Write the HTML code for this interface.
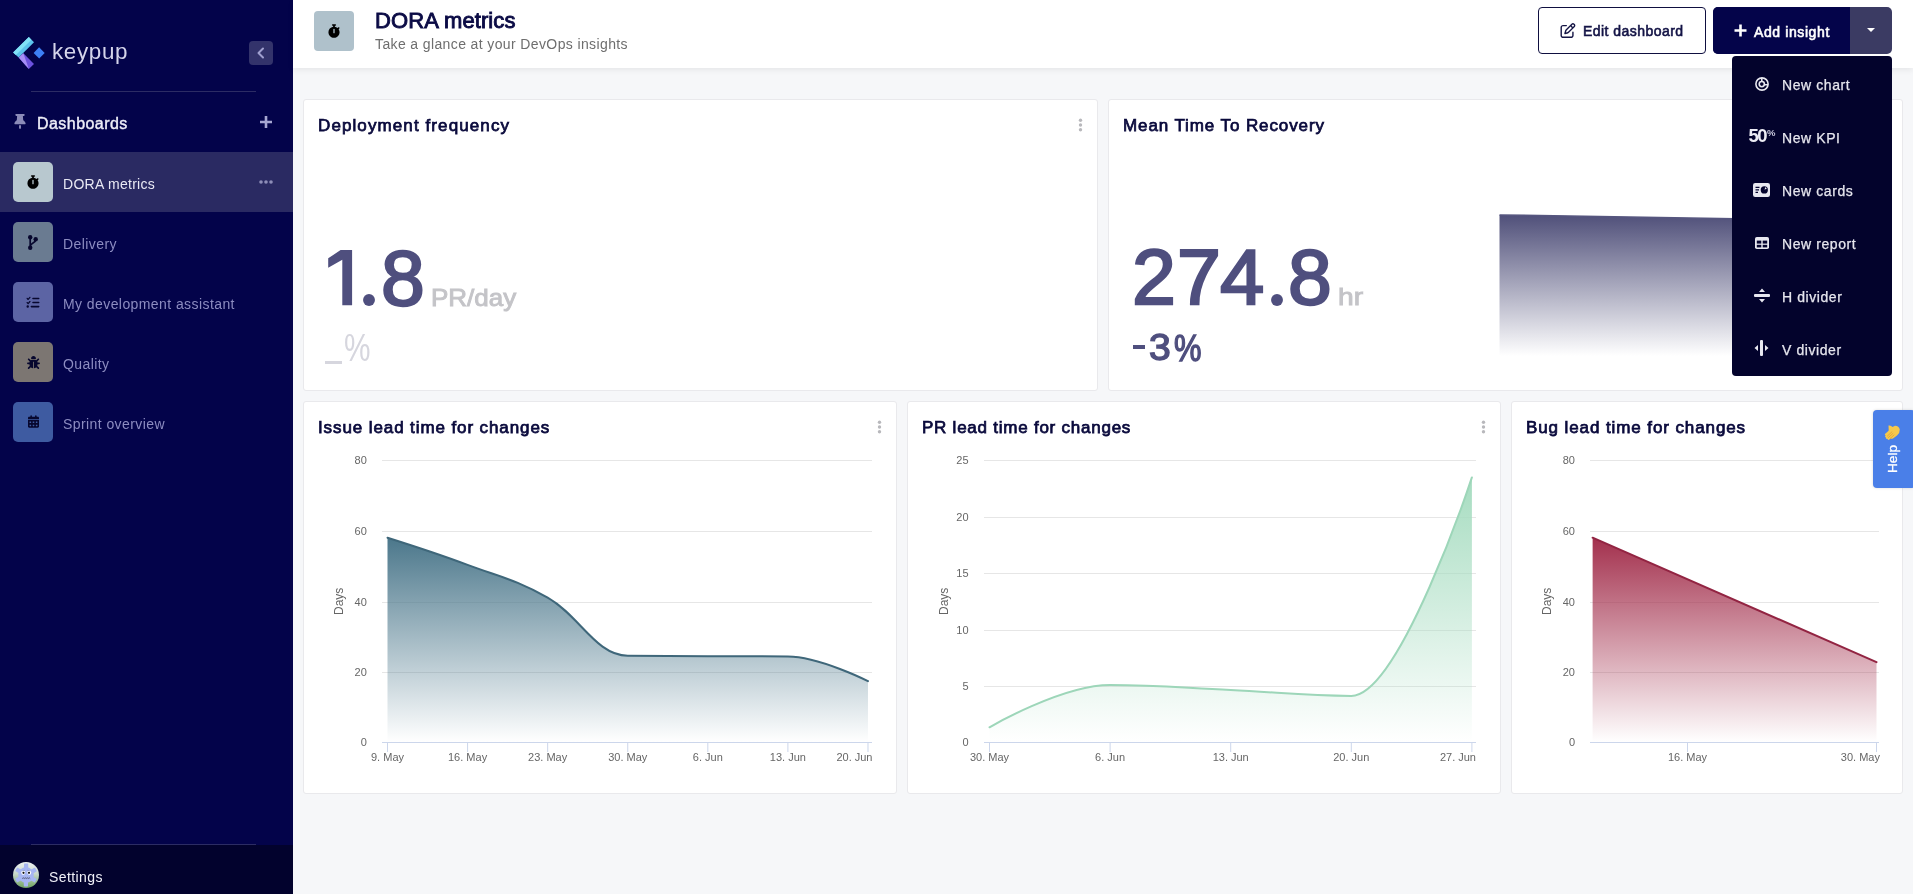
<!DOCTYPE html>
<html><head><meta charset="utf-8">
<style>
*{box-sizing:border-box;margin:0;padding:0}
html,body{width:1913px;height:894px;overflow:hidden;background:#f6f7f9;font-family:"Liberation Sans",sans-serif;position:relative}
body{will-change:transform}
.abs{position:absolute}
#sb{left:0;top:0;width:293px;height:894px;background:#03034a}
#sbfoot{left:0;top:845px;width:293px;height:49px;background:#02022d}
.sep{height:1px;background:#2c2c64}
.item{left:0;width:293px;height:60px}
.item.act{background:#2a2a62}
.ibox{left:13px;top:10px;width:40px;height:40px;border-radius:5px}
.ilab{left:63px;top:2px;line-height:60px;font-size:14px;color:#8c8cc0;white-space:nowrap;letter-spacing:.42px}
.act .ilab{color:#e9e9f4}
#hdr{left:293px;top:0;width:1620px;height:68px;background:#fff;box-shadow:0 2px 6px rgba(0,0,0,.07)}
.card{background:#fff;border:1px solid #e9e9ec;border-radius:3px}
.ct{font-size:17px;line-height:20px;font-weight:normal;-webkit-text-stroke:.75px #0a0a3c;color:#0a0a3c;white-space:nowrap;letter-spacing:.9px;margin-top:1.6px}
.big{font-size:81px;line-height:1;font-weight:bold;color:#4f4f7e;white-space:nowrap}
.unit{font-size:25px;line-height:1;font-weight:bold;color:#c4c4c8;white-space:nowrap;letter-spacing:.4px}
.dots{width:4px}
.dots i{display:block;width:4px;height:4px;border-radius:50%;background:#b9b9c2;margin-bottom:1.5px}
.menu{left:1732px;top:56px;width:160px;height:320px;background:#03032c;border-radius:4px}
.mt{left:1782px;font-size:14px;line-height:16px;color:#e6e6ee;-webkit-text-stroke:.25px #e6e6ee;white-space:nowrap;letter-spacing:.58px}
</style></head><body>
<!-- SIDEBAR -->
<div id="sb" class="abs"></div>
<div id="sbfoot" class="abs"></div>
<div class="abs sep" style="left:31px;top:91px;width:225px"></div>
<div class="abs sep" style="left:31px;top:844px;width:225px"></div>
<svg class="abs" style="left:0;top:0" width="60" height="80" viewBox="0 0 60 80">
<polygon points="13.1,52.6 28.8,37.1 34.0,42.3 18.7,57.5" fill="#5cc3ec"/>
<polygon points="13.1,52.6 28.8,37.1 31.4,39.7 15.9,55.1" fill="#82e2f7"/>
<polygon points="18.7,57.5 23.4,53.3 34.0,64.0 28.8,68.9" fill="#6c52de"/>
<polygon points="18.7,57.5 23.4,53.3 28.8,68.9" fill="#a68ef6"/>
<polygon points="39.1,47.3 44.7,53.0 39.2,58.6 33.6,52.9" fill="#3d80f6"/>
</svg>
<div class="abs" style="left:52px;top:37.5px;font-size:22.4px;line-height:28px;color:#d4d4ea;letter-spacing:.65px">keypup</div>
<div class="abs" style="left:249px;top:41px;width:24px;height:24px;border-radius:4px;background:#33336b"></div>
<svg class="abs" style="left:249px;top:41px" width="24" height="24" viewBox="0 0 24 24"><polyline points="14,7.5 9.5,12 14,16.5" fill="none" stroke="#a0a0cf" stroke-width="2" stroke-linecap="round" stroke-linejoin="round"/></svg>
<svg class="abs" style="left:14px;top:114px" width="12" height="15" viewBox="0 0 384 512"><path fill="#8b8bb8" d="M32 32C32 14.3 46.3 0 64 0H320c17.7 0 32 14.3 32 32s-14.3 32-32 32H290.5l11.4 148.2c36.7 19.9 65.7 53.2 79.5 94.7l1 3c3.3 9.8 1.6 20.5-4.4 28.8s-15.700 13.3-26 13.3H32c-10.3 0-19.9-4.9-26-13.3s-7.700-19.1-4.4-28.8l1-3c13.8-41.5 42.8-74.8 79.5-94.7L93.5 64H64C46.3 64 32 49.7 32 32zM160 384h64v96c0 17.7-14.3 32-32 32s-32-14.3-32-32V384z"/></svg>
<div class="abs" style="left:37px;top:114px;font-size:16px;line-height:20px;font-weight:normal;-webkit-text-stroke:.4px #eeeef8;letter-spacing:.45px;color:#eeeef8">Dashboards</div>
<svg class="abs" style="left:259px;top:115px" width="14" height="14" viewBox="0 0 14 14"><path d="M7 1V13M1 7H13" stroke="#a7a7d2" stroke-width="2.6"/></svg>

<div class="abs item act" style="top:152px">
 <div class="abs ibox" style="background:#b8c8cf"><svg class="abs" style="left:14px;top:13px" width="12" height="14" viewBox="0 0 448 512"><path fill="#000" d="M176 0c-17.7 0-32 14.3-32 32s14.3 32 32 32h16V98.4C92.3 113.8 16 200 16 304c0 114.9 93.1 208 208 208s208-93.1 208-208c0-41.8-12.3-80.7-33.5-113.2l24.1-24.1c12.5-12.5 12.5-32.8 0-45.3s-32.8-12.5-45.3 0L355.7 143c-28.1-23-62.2-38.8-99.7-44.6V64h16c17.700 0 32-14.3 32-32s-14.3-32-32-32H224 176zm72 192V320c0 13.3-10.7 24-24 24s-24-10.7-24-24V192c0-13.3 10.7-24 24-24s24 10.7 24 24z"/></svg></div>
 <div class="abs ilab" style="letter-spacing:.28px">DORA metrics</div>
 <svg class="abs" style="left:259px;top:25px" width="14" height="10" viewBox="0 0 14 10"><circle cx="2" cy="5" r="1.8" fill="#8e8eb8"/><circle cx="7" cy="5" r="1.8" fill="#8e8eb8"/><circle cx="12" cy="5" r="1.8" fill="#8e8eb8"/></svg>
</div>
<div class="abs item" style="top:212px">
 <div class="abs ibox" style="background:#6a7b91"><svg class="abs" style="left:13px;top:11px" width="14" height="18" viewBox="0 0 14 18"><path d="M4.2 4.5V15.2M9.7 6.5C9.7 10.5 4.5 9.5 4.2 13.5" stroke="#07072e" stroke-width="1.7" fill="none"/><circle cx="4.2" cy="4.3" r="2.2" fill="#07072e"/><circle cx="9.7" cy="6.2" r="2.2" fill="#07072e"/><circle cx="4.2" cy="14.8" r="2.2" fill="#07072e"/></svg></div>
 <div class="abs ilab">Delivery</div>
</div>
<div class="abs item" style="top:272px">
 <div class="abs ibox" style="background:#5c64a4"><svg class="abs" style="left:13px;top:13.5px" width="14" height="13" viewBox="0 0 512 512"><path fill="#07072e" d="M152.1 38.2c9.9 8.9 10.7 24 1.8 33.9l-72 80c-4.4 4.9-10.6 7.8-17.2 7.9s-12.9-2.4-17.6-7L7 113C-2.3 103.6-2.3 88.4 7 79s24.6-9.4 33.9 0l22.1 22.1 55.1-61.2c8.9-9.9 24-10.7 33.9-1.8zm0 160c9.9 8.9 10.7 24 1.8 33.9l-72 80c-4.4 4.9-10.6 7.8-17.2 7.9s-12.9-2.4-17.6-7L7 273c-9.4-9.4-9.4-24.6 0-33.9s24.6-9.4 33.9 0l22.1 22.1 55.1-61.2c8.9-9.9 24-10.7 33.9-1.8zM224 96c0-17.7 14.3-32 32-32H480c17.7 0 32 14.3 32 32s-14.3 32-32 32H256c-17.7 0-32-14.3-32-32zm0 160c0-17.7 14.3-32 32-32H480c17.7 0 32 14.3 32 32s-14.3 32-32 32H256c-17.7 0-32-14.3-32-32zM160 416c0-17.7 14.3-32 32-32H480c17.7 0 32 14.3 32 32s-14.3 32-32 32H192c-17.7 0-32-14.3-32-32zM48 368a48 48 0 1 1 0 96 48 48 0 1 1 0-96z"/></svg></div>
 <div class="abs ilab">My development assistant</div>
</div>
<div class="abs item" style="top:332px">
 <div class="abs ibox" style="background:#7c7672"><svg class="abs" style="left:13.5px;top:13.5px" width="13" height="13" viewBox="0 0 512 512"><path fill="#07072e" d="M256 0c53 0 96 43 96 96v3.6c0 15.7-12.7 28.4-28.4 28.4H188.4c-15.7 0-28.4-12.7-28.4-28.4V96c0-53 43-96 96-96zM41.4 105.4c12.5-12.5 32.8-12.5 45.3 0l64 64c.7 .7 1.3 1.4 1.9 2.1c14.2-7.3 30.4-11.4 47.5-11.4H312c17.1 0 33.2 4.1 47.5 11.4c.6-.7 1.2-1.4 1.9-2.1l64-64c12.5-12.5 32.8-12.5 45.3 0s12.5 32.8 0 45.3l-64 64c-.7 .7-1.4 1.3-2.1 1.9c6.2 12 10.1 25.3 11.1 39.5H480c17.7 0 32 14.3 32 32s-14.3 32-32 32H416c0 24.6-5.5 47.8-15.4 68.6c2.2 1.3 4.2 2.9 6 4.8l64 64c12.5 12.5 12.5 32.8 0 45.3s-32.8 12.5-45.3 0l-63.1-63.1c-24.5 21.8-55.8 36.2-90.3 39.6V240c0-8.8-7.2-16-16-16s-16 7.2-16 16V479.2c-34.5-3.4-65.8-17.8-90.3-39.6L86.6 502.6c-12.5 12.5-32.8 12.5-45.3 0s-12.5-32.8 0-45.3l64-64c1.9-1.9 3.9-3.4 6-4.8C101.5 367.8 96 344.6 96 320H32c-17.7 0-32-14.3-32-32s14.3-32 32-32H96.3c1.1-14.1 5-27.5 11.1-39.5c-.7-.6-1.4-1.2-2.1-1.9l-64-64c-12.5-12.5-12.5-32.8 0-45.3z"/></svg></div>
 <div class="abs ilab">Quality</div>
</div>
<div class="abs item" style="top:392px">
 <div class="abs ibox" style="background:#3e5ba1"><svg class="abs" style="left:14.5px;top:13px" width="11" height="13" viewBox="0 0 448 512"><path fill="#07072e" d="M128 0c17.7 0 32 14.3 32 32V64H288V32c0-17.7 14.3-32 32-32s32 14.3 32 32V64h48c26.5 0 48 21.5 48 48v48H0V112C0 85.5 21.5 64 48 64H96V32c0-17.7 14.3-32 32-32zM0 192H448V464c0 26.5-21.5 48-48 48H48c-26.5 0-48-21.5-48-48V192zm80 64c-8.8 0-16 7.2-16 16v32c0 8.8 7.2 16 16 16h32c8.8 0 16-7.2 16-16V272c0-8.8-7.2-16-16-16H80zm128 0c-8.8 0-16 7.2-16 16v32c0 8.8 7.2 16 16 16h32c8.8 0 16-7.2 16-16V272c0-8.8-7.2-16-16-16H208zm112 16v32c0 8.8 7.2 16 16 16h32c8.8 0 16-7.2 16-16V272c0-8.8-7.2-16-16-16H336c-8.8 0-16 7.2-16 16zM80 384c-8.8 0-16 7.2-16 16v32c0 8.8 7.2 16 16 16h32c8.8 0 16-7.2 16-16V400c0-8.8-7.2-16-16-16H80zm112 16v32c0 8.8 7.2 16 16 16h32c8.8 0 16-7.2 16-16V400c0-8.8-7.2-16-16-16H208c-8.8 0-16 7.2-16 16zm144-16c-8.8 0-16 7.2-16 16v32c0 8.8 7.2 16 16 16h32c8.8 0 16-7.2 16-16V400c0-8.8-7.2-16-16-16H336z"/></svg></div>
 <div class="abs ilab">Sprint overview</div>
</div>
<svg class="abs" style="left:13px;top:862px" width="26" height="26" viewBox="0 0 26 26">
<defs><linearGradient id="av" x1="0" y1="0" x2="0" y2="1"><stop offset="0" stop-color="#eef2f2"/><stop offset=".45" stop-color="#c9d9cc"/><stop offset="1" stop-color="#6fa35f"/></linearGradient></defs>
<circle cx="13" cy="13" r="13" fill="url(#av)"/>
<rect x="11" y="1.6" width="4.2" height="6" rx=".6" fill="#a7b6f2" transform="rotate(0 13 13)"/><rect x="11" y="1.6" width="4.2" height="6" rx=".6" fill="#a7b6f2" transform="rotate(60 13 13)"/><rect x="11" y="1.6" width="4.2" height="6" rx=".6" fill="#a7b6f2" transform="rotate(120 13 13)"/><rect x="11" y="1.6" width="4.2" height="6" rx=".6" fill="#a7b6f2" transform="rotate(180 13 13)"/><rect x="11" y="1.6" width="4.2" height="6" rx=".6" fill="#a7b6f2" transform="rotate(240 13 13)"/><rect x="11" y="1.6" width="4.2" height="6" rx=".6" fill="#a7b6f2" transform="rotate(-60 13 13)"/><circle cx="13" cy="13" r="7.8" fill="#a7b6f2"/>
<ellipse cx="10.2" cy="10.6" rx="1.9" ry="2.3" fill="#fff"/><ellipse cx="16.3" cy="10.6" rx="1.9" ry="2.3" fill="#fff"/>
<circle cx="10.5" cy="10.8" r="1.1" fill="#111"/><circle cx="16" cy="10.8" r="1.1" fill="#111"/>
<path d="M8.8 9 L11.8 8.3 M14.5 8.3 L17.5 9" stroke="#6c7ab8" stroke-width=".6"/>
<path d="M9.2 16.6 l1 -.9 1 .9 1 -.9 1 .9 1 -.9 1 .9 1 -.9 1 .9" stroke="#334" stroke-width=".7" fill="none"/>
</svg>
<div class="abs" style="left:49px;top:867px;font-size:14px;line-height:20px;color:#f0f0f8;letter-spacing:.4px">Settings</div>

<!-- HEADER -->
<div id="hdr" class="abs"></div>
<div class="abs" style="left:314px;top:11px;width:40px;height:40px;border-radius:4px;background:#afc1cb"><svg class="abs" style="left:14px;top:13px" width="12" height="14" viewBox="0 0 448 512"><path fill="#000" d="M176 0c-17.7 0-32 14.3-32 32s14.3 32 32 32h16V98.4C92.3 113.8 16 200 16 304c0 114.9 93.1 208 208 208s208-93.1 208-208c0-41.8-12.3-80.7-33.5-113.2l24.1-24.1c12.5-12.5 12.5-32.8 0-45.3s-32.8-12.5-45.3 0L355.7 143c-28.1-23-62.2-38.8-99.7-44.6V64h16c17.700 0 32-14.3 32-32s-14.3-32-32-32H224 176zm72 192V320c0 13.3-10.7 24-24 24s-24-10.7-24-24V192c0-13.3 10.7-24 24-24s24 10.7 24 24z"/></svg></div>
<div class="abs" style="left:375px;top:8.5px;font-size:22px;line-height:24px;font-weight:normal;-webkit-text-stroke:.9px #0b0b45;color:#0b0b45;letter-spacing:.1px;white-space:nowrap">DORA metrics</div>
<div class="abs" style="left:375px;top:35px;font-size:14px;line-height:18px;color:#6e6e6e;letter-spacing:.38px;white-space:nowrap">Take a glance at your DevOps insights</div>
<div class="abs" style="left:1538px;top:7px;width:168px;height:47px;border:1px solid #0f0f40;border-radius:4px;background:#fff"></div>
<svg class="abs" style="left:1560px;top:23px" width="16" height="15" viewBox="0 0 512 512"><path fill="#151545" d="M441 58.9L453.1 71c9.4 9.4 9.4 24.6 0 33.9L424 134.1 377.9 88 407 58.9c9.4-9.4 24.6-9.4 33.9 0zM209.8 256.2L344 121.9 390.1 168 255.8 302.2c-2.9 2.9-6.5 5-10.4 6.1l-58.5 16.7 16.7-58.5c1.1-3.9 3.2-7.5 6.1-10.4zM373.1 25L175.8 222.2c-8.7 8.7-15 19.4-18.300 31.1l-28.6 100c-2.4 8.4-.1 17.4 6.1 23.6s15.2 8.5 23.6 6.1l100-28.6c11.8-3.4 22.5-9.7 31.1-18.3L487 138.9c28.1-28.1 28.1-73.7 0-101.8L474.9 25C446.8-3.1 401.2-3.1 373.1 25zM88 64C39.4 64 0 103.4 0 152V424c0 48.6 39.4 88 88 88H360c48.6 0 88-39.4 88-88V312c0-13.3-10.7-24-24-24s-24 10.7-24 24V424c0 22.1-17.9 40-40 40H88c-22.1 0-40-17.9-40-40V152c0-22.1 17.9-40 40-40H200c13.3 0 24-10.7 24-24s-10.7-24-24-24H88z"/></svg>
<div class="abs" style="left:1583px;top:22px;font-size:14px;line-height:18px;font-weight:normal;-webkit-text-stroke:.6px #141446;letter-spacing:.45px;color:#141446;white-space:nowrap">Edit dashboard</div>
<div class="abs" style="left:1713px;top:7px;width:179px;height:47px;border-radius:5px;background:#3b3b63;overflow:hidden"><div class="abs" style="left:0;top:0;width:137px;height:47px;background:#04044a"></div></div>
<svg class="abs" style="left:1734px;top:24px" width="13" height="13" viewBox="0 0 13 13"><path d="M6.5 .5V12.5M.5 6.5H12.5" stroke="#fff" stroke-width="2.6"/></svg>
<div class="abs" style="left:1754px;top:22.5px;font-size:14px;line-height:18px;font-weight:normal;-webkit-text-stroke:.6px #fff;color:#fff;white-space:nowrap;letter-spacing:.6px">Add insight</div>
<svg class="abs" style="left:1866px;top:27px" width="10" height="6" viewBox="0 0 10 6"><path d="M1 1H9L5 5Z" fill="#fff"/></svg>

<!-- CARDS -->
<div class="abs card" style="left:303px;top:99px;width:795px;height:292px"></div>
<div class="abs card" style="left:1108px;top:99px;width:795px;height:292px"></div>
<div class="abs card" style="left:303px;top:401px;width:594px;height:393px"></div>
<div class="abs card" style="left:907px;top:401px;width:594px;height:393px"></div>
<div class="abs card" style="left:1511px;top:401px;width:392px;height:393px"></div>
<div class="abs ct" style="left:318px;top:114px;letter-spacing:1.1px">Deployment frequency</div>
<div class="abs ct" style="left:1123px;top:114px">Mean Time To Recovery</div>
<div class="abs ct" style="left:318px;top:416px">Issue lead time for changes</div>
<div class="abs ct" style="left:922px;top:416px;letter-spacing:.76px">PR lead time for changes</div>
<div class="abs ct" style="left:1526px;top:416px">Bug lead time for changes</div>
<svg class="abs" style="left:1078px;top:118px" width="5" height="14"><circle cx="2.5" cy="2.2" r="1.7" fill="#b8b8bc"/><circle cx="2.5" cy="7" r="1.7" fill="#b8b8bc"/><circle cx="2.5" cy="11.8" r="1.7" fill="#b8b8bc"/></svg>
<svg class="abs" style="left:877px;top:420px" width="5" height="14"><circle cx="2.5" cy="2.2" r="1.7" fill="#b8b8bc"/><circle cx="2.5" cy="7" r="1.7" fill="#b8b8bc"/><circle cx="2.5" cy="11.8" r="1.7" fill="#b8b8bc"/></svg>
<svg class="abs" style="left:1481px;top:420px" width="5" height="14"><circle cx="2.5" cy="2.2" r="1.7" fill="#b8b8bc"/><circle cx="2.5" cy="7" r="1.7" fill="#b8b8bc"/><circle cx="2.5" cy="11.8" r="1.7" fill="#b8b8bc"/></svg>
<!-- KPI -->
<svg class="abs" style="left:0;top:0" width="400" height="320"><polygon points="340.6,250.1 352.1,250.1 352.1,305.3 342.3,305.3 342.3,259.8 328.2,267.7 328.2,258.3" fill="#4f4f7e"/></svg>
<svg class="abs" style="left:362.4px;top:292.7px" width="14" height="14"><circle cx="7" cy="7" r="5.95" fill="#4f4f7e"/></svg>
<div class="abs" style="left:381.00px;top:238.58px;font-size:75px;line-height:1;font-weight:normal;-webkit-text-stroke:2.2px #4f4f7e;color:#4f4f7e;white-space:nowrap;transform:scale(1.050,1.042);transform-origin:0 0">8</div>
<div class="abs" style="left:1131.64px;top:238.87px;font-size:75px;line-height:1;font-weight:normal;-webkit-text-stroke:2.2px #4f4f7e;color:#4f4f7e;white-space:nowrap;transform:scale(1.053,1.033);transform-origin:0 0">2</div>
<div class="abs" style="left:1176.74px;top:238.46px;font-size:75px;line-height:1;font-weight:normal;-webkit-text-stroke:2.2px #4f4f7e;color:#4f4f7e;white-space:nowrap;transform:scale(1.053,1.040);transform-origin:0 0">7</div>
<div class="abs" style="left:1219.94px;top:238.46px;font-size:75px;line-height:1;font-weight:normal;-webkit-text-stroke:2.2px #4f4f7e;color:#4f4f7e;white-space:nowrap;transform:scale(1.062,1.040);transform-origin:0 0">4</div>
<svg class="abs" style="left:1269.6px;top:292.7px" width="14" height="14"><circle cx="7" cy="7" r="5.95" fill="#4f4f7e"/></svg>
<div class="abs" style="left:1288.20px;top:238.64px;font-size:75px;line-height:1;font-weight:normal;-webkit-text-stroke:2.2px #4f4f7e;color:#4f4f7e;white-space:nowrap;transform:scale(1.050,1.036);transform-origin:0 0">8</div>
<div class="abs" style="left:1148.64px;top:328.97px;font-size:37px;line-height:1;font-weight:normal;-webkit-text-stroke:1.4px #4f4f7e;color:#4f4f7e;white-space:nowrap;transform:scale(1.058,1.007);transform-origin:0 0">3</div>
<div class="abs" style="left:1174.26px;top:328.93px;font-size:37px;line-height:1;font-weight:normal;-webkit-text-stroke:1.4px #4f4f7e;color:#4f4f7e;white-space:nowrap;transform:scale(0.835,1.018);transform-origin:0 0">%</div>
<div class="abs" style="left:430.62px;top:285.5px;font-size:24px;line-height:1;font-weight:normal;-webkit-text-stroke:0.9px #c4c4c8;color:#c4c4c8;white-space:nowrap;transform:scale(1.083,1);transform-origin:0 0">PR/day</div>
<div class="abs" style="left:1338.12px;top:284.24px;font-size:24px;line-height:1;font-weight:normal;-webkit-text-stroke:0.9px #c4c4c8;color:#c4c4c8;white-space:nowrap;transform:scale(1.175,1.032);transform-origin:0 0">hr</div>
<div class="abs" style="left:343.99px;top:327.97px;font-size:37px;line-height:1;font-weight:normal;-webkit-text-stroke:0px #d6d6de;color:#d6d6de;white-space:nowrap;transform:scale(0.806,1.065);transform-origin:0 0">%</div>
<div class="abs" style="left:1132.5px;top:344.8px;width:12.4px;height:4.2px;background:#4f4f7e"></div>
<div class="abs" style="left:325px;top:361px;width:16.5px;height:3px;background:#d6d6de"></div>
<!-- CHARTS -->
<svg class="abs" style="left:0;top:0" width="1913" height="894"><defs><linearGradient id="gm" gradientUnits="userSpaceOnUse" x1="0" y1="215" x2="0" y2="356"><stop offset="0" stop-color="#50507a"/><stop offset="1" stop-color="#50507a" stop-opacity="0"/></linearGradient></defs>
<path d="M1499.5 214.9 L1888 221.2 L1888 356 L1499.5 356 Z" fill="url(#gm)"/><path d="M1499.5 214.9 L1888 221.2" stroke="#56567f" stroke-width="1.5" fill="none"/></svg>
<svg class="abs" style="left:0;top:0" width="1913" height="894" font-family="Liberation Sans" font-size="11" fill="#666"><rect x="382" y="460" width="490" height="1" fill="#e6e6e6"/><rect x="382" y="531" width="490" height="1" fill="#e6e6e6"/><rect x="382" y="602" width="490" height="1" fill="#e6e6e6"/><rect x="382" y="672" width="490" height="1" fill="#e6e6e6"/><defs><linearGradient id="gi" gradientUnits="userSpaceOnUse" x1="0" y1="537.7" x2="0" y2="742"><stop offset="0" stop-color="#4b778b" stop-opacity="1.0"/><stop offset="1" stop-color="#4b778b" stop-opacity="0"/></linearGradient></defs><path d="M387.50 537.70 C387.50 537.70 435.55 552.86 467.58 564.84 C499.61 576.83 515.63 579.43 547.66 597.62 C579.69 615.81 595.71 655.43 627.74 655.78 C659.77 656.14 675.79 656.00 707.82 656.14 C739.85 656.28 755.87 656.14 787.90 656.49 C819.93 656.84 867.98 681.16 867.98 681.16 L867.98 742 L387.50 742 Z" fill="url(#gi)"/><path d="M387.50 537.70 C387.50 537.70 435.55 552.86 467.58 564.84 C499.61 576.83 515.63 579.43 547.66 597.62 C579.69 615.81 595.71 655.43 627.74 655.78 C659.77 656.14 675.79 656.00 707.82 656.14 C739.85 656.28 755.87 656.14 787.90 656.49 C819.93 656.84 867.98 681.16 867.98 681.16" fill="none" stroke="#3f677a" stroke-width="2" stroke-linejoin="round" stroke-linecap="round"/><rect x="382" y="742" width="490" height="1" fill="#ccd6eb"/><rect x="387.0" y="742" width="1" height="10" fill="#ccd6eb"/><rect x="467.08" y="742" width="1" height="10" fill="#ccd6eb"/><rect x="547.16" y="742" width="1" height="10" fill="#ccd6eb"/><rect x="627.24" y="742" width="1" height="10" fill="#ccd6eb"/><rect x="707.3199999999999" y="742" width="1" height="10" fill="#ccd6eb"/><rect x="787.4" y="742" width="1" height="10" fill="#ccd6eb"/><rect x="867.48" y="742" width="1" height="10" fill="#ccd6eb"/><text x="366.8" y="464.10" text-anchor="end">80</text><text x="366.8" y="535.10" text-anchor="end">60</text><text x="366.8" y="606.10" text-anchor="end">40</text><text x="366.8" y="676.10" text-anchor="end">20</text><text x="366.8" y="746.10" text-anchor="end">0</text><text x="387.5" y="761" text-anchor="middle">9. May</text><text x="467.58" y="761" text-anchor="middle">16. May</text><text x="547.66" y="761" text-anchor="middle">23. May</text><text x="627.74" y="761" text-anchor="middle">30. May</text><text x="707.8199999999999" y="761" text-anchor="middle">6. Jun</text><text x="787.9" y="761" text-anchor="middle">13. Jun</text><text x="872.5" y="761" text-anchor="end">20. Jun</text><text x="0" y="0" font-size="12" text-anchor="middle" transform="translate(342.90000000000003 601.3) rotate(-90)">Days</text></svg>
<svg class="abs" style="left:0;top:0" width="1913" height="894" font-family="Liberation Sans" font-size="11" fill="#666"><rect x="984" y="460" width="492" height="1" fill="#e6e6e6"/><rect x="984" y="517" width="492" height="1" fill="#e6e6e6"/><rect x="984" y="573" width="492" height="1" fill="#e6e6e6"/><rect x="984" y="630" width="492" height="1" fill="#e6e6e6"/><rect x="984" y="686" width="492" height="1" fill="#e6e6e6"/><defs><linearGradient id="gp" gradientUnits="userSpaceOnUse" x1="0" y1="477.4" x2="0" y2="742"><stop offset="0" stop-color="#a6dcc0" stop-opacity="1.0"/><stop offset="1" stop-color="#a6dcc0" stop-opacity="0"/></linearGradient></defs><path d="M989.50 727.27 C989.50 727.27 1061.86 684.97 1110.10 684.97 C1158.34 684.97 1182.46 687.86 1230.70 690.05 C1278.94 692.24 1303.06 695.91 1351.30 695.91 C1399.54 695.91 1471.90 477.42 1471.90 477.42 L1471.90 742 L989.50 742 Z" fill="url(#gp)"/><path d="M989.50 727.27 C989.50 727.27 1061.86 684.97 1110.10 684.97 C1158.34 684.97 1182.46 687.86 1230.70 690.05 C1278.94 692.24 1303.06 695.91 1351.30 695.91 C1399.54 695.91 1471.90 477.42 1471.90 477.42" fill="none" stroke="#9dd6b9" stroke-width="2" stroke-linejoin="round" stroke-linecap="round"/><rect x="984" y="742" width="492" height="1" fill="#ccd6eb"/><rect x="989.0" y="742" width="1" height="10" fill="#ccd6eb"/><rect x="1109.6" y="742" width="1" height="10" fill="#ccd6eb"/><rect x="1230.2" y="742" width="1" height="10" fill="#ccd6eb"/><rect x="1350.8" y="742" width="1" height="10" fill="#ccd6eb"/><rect x="1471.4" y="742" width="1" height="10" fill="#ccd6eb"/><text x="968.6" y="463.60" text-anchor="end">25</text><text x="968.6" y="520.60" text-anchor="end">20</text><text x="968.6" y="576.60" text-anchor="end">15</text><text x="968.6" y="633.60" text-anchor="end">10</text><text x="968.6" y="689.60" text-anchor="end">5</text><text x="968.6" y="745.60" text-anchor="end">0</text><text x="989.5" y="761" text-anchor="middle">30. May</text><text x="1110.1" y="761" text-anchor="middle">6. Jun</text><text x="1230.7" y="761" text-anchor="middle">13. Jun</text><text x="1351.3" y="761" text-anchor="middle">20. Jun</text><text x="1476" y="761" text-anchor="end">27. Jun</text><text x="0" y="0" font-size="12" text-anchor="middle" transform="translate(947.5 601.3) rotate(-90)">Days</text></svg>
<svg class="abs" style="left:0;top:0" width="1913" height="894" font-family="Liberation Sans" font-size="11" fill="#666"><rect x="1590" y="460" width="289" height="1" fill="#e6e6e6"/><rect x="1590" y="531" width="289" height="1" fill="#e6e6e6"/><rect x="1590" y="602" width="289" height="1" fill="#e6e6e6"/><rect x="1590" y="672" width="289" height="1" fill="#e6e6e6"/><defs><linearGradient id="gb" gradientUnits="userSpaceOnUse" x1="0" y1="537.7" x2="0" y2="742"><stop offset="0" stop-color="#a3304d" stop-opacity="1.0"/><stop offset="1" stop-color="#a3304d" stop-opacity="0"/></linearGradient></defs><path d="M1592.60 537.70 L1876.50 662.13 L1876.50 742 L1592.60 742 Z" fill="url(#gb)"/><path d="M1592.60 537.70 L1876.50 662.13" fill="none" stroke="#922442" stroke-width="2" stroke-linejoin="round" stroke-linecap="round"/><rect x="1590" y="742" width="289" height="1" fill="#ccd6eb"/><rect x="1687.0" y="742" width="1" height="10" fill="#ccd6eb"/><rect x="1876.0" y="742" width="1" height="10" fill="#ccd6eb"/><text x="1575" y="464.10" text-anchor="end">80</text><text x="1575" y="535.10" text-anchor="end">60</text><text x="1575" y="606.10" text-anchor="end">40</text><text x="1575" y="676.10" text-anchor="end">20</text><text x="1575" y="746.10" text-anchor="end">0</text><text x="1687.5" y="761" text-anchor="middle">16. May</text><text x="1880" y="761" text-anchor="end">30. May</text><text x="0" y="0" font-size="12" text-anchor="middle" transform="translate(1550.7 601.3) rotate(-90)">Days</text></svg>
<!-- /CHARTS -->
<!-- MENU -->
<div class="abs menu"></div>
<div class="abs mt" style="top:76.5px">New chart</div>
<div class="abs mt" style="top:129.5px">New KPI</div>
<div class="abs mt" style="top:182.5px">New cards</div>
<div class="abs mt" style="top:235.5px">New report</div>
<div class="abs mt" style="top:288.5px">H divider</div>
<div class="abs mt" style="top:342px">V divider</div>
<svg class="abs" style="left:1754px;top:76px" width="16" height="16" viewBox="0 0 16 16" fill="none" stroke="#e8e8f0" stroke-width="1.6"><circle cx="8" cy="8" r="6.1"/><circle cx="7.8" cy="8.1" r="2.6"/><path d="M7.8 1.9V5.5M10.4 8.7H14.1"/></svg>
<div class="abs" style="left:1748.5px;top:127px;font-size:18.5px;line-height:18px;font-weight:bold;color:#ececf4;letter-spacing:-1.6px">50</div>
<div class="abs" style="left:1767px;top:128px;font-size:9.5px;line-height:10px;font-weight:bold;color:#c8c8dc">%</div>
<svg class="abs" style="left:1753px;top:183px" width="17" height="14" viewBox="0 0 17 14"><rect x="0" y="0" width="17" height="14" rx="2.2" fill="#e8e8f0"/><path d="M2.5 4.3H6.5M2.5 6.8H6M2.5 9.3H5" stroke="#05042e" stroke-width="1.2"/><circle cx="11.3" cy="6.9" r="3.6" fill="#05042e"/><path d="M11.5 6.7L12.4 4.1L13.8 5.4Z" fill="#e8e8f0"/></svg>
<svg class="abs" style="left:1755px;top:237px" width="14" height="12" viewBox="0 0 14 12"><rect x="0" y="0" width="14" height="12" rx="1.8" fill="#e8e8f0"/><rect x="1.8" y="3.6" width="4.5" height="3" fill="#05042e"/><rect x="7.7" y="3.6" width="4.5" height="3" fill="#05042e"/><rect x="1.8" y="7.8" width="4.5" height="2.6" fill="#05042e"/><rect x="7.7" y="7.8" width="4.5" height="2.6" fill="#05042e"/></svg>
<svg class="abs" style="left:1753.5px;top:288px" width="16" height="15" viewBox="0 0 16 15"><rect x="0" y="6" width="16" height="3" rx="1" fill="#e8e8f0"/><path d="M8 .5L11 4H5Z M8 14.5L11 11H5Z" fill="#e8e8f0"/></svg>
<svg class="abs" style="left:1754px;top:340px" width="15" height="16" viewBox="0 0 15 16"><rect x="6" y="0" width="3" height="16" rx="1" fill="#e8e8f0"/><path d="M.5 8L4 5V11Z M14.5 8L11 5V11Z" fill="#e8e8f0"/></svg>
<!-- HELP -->
<div class="abs" style="left:1873px;top:410px;width:42px;height:78px;border-radius:4px;background:#4a7fe8;box-shadow:0 0 3px rgba(0,0,0,.15)"></div>
<svg class="abs" style="left:1884px;top:424px" width="17" height="16" viewBox="0 0 17 16"><path d="M4.5 1.5 Q7 1 8.5 3 L11 1.8 Q15 2 15.8 5.5 Q16 9 13 11.5 L9 14.5 Q6.5 15.5 5 13.5 Z" fill="#f6c84c"/><path d="M2 12.5 L8 7M2.8 14 L9 8.5M4.5 15 L10 10M1.8 10.5 L7 6" stroke="#f6c84c" stroke-width="1.8" stroke-linecap="round"/><path d="M3.2 12.2L8.2 7.6M4 13.8L9.2 9.2M5.8 14.8L10.3 10.7" stroke="#d9922a" stroke-width=".6"/></svg>
<div class="abs" style="left:1885.5px;top:472.5px;width:30px;height:14px;font-size:13.6px;line-height:14px;color:#fff;-webkit-text-stroke:.3px #fff;transform:rotate(-90deg);transform-origin:0 0;white-space:nowrap">Help</div>
</body></html>
